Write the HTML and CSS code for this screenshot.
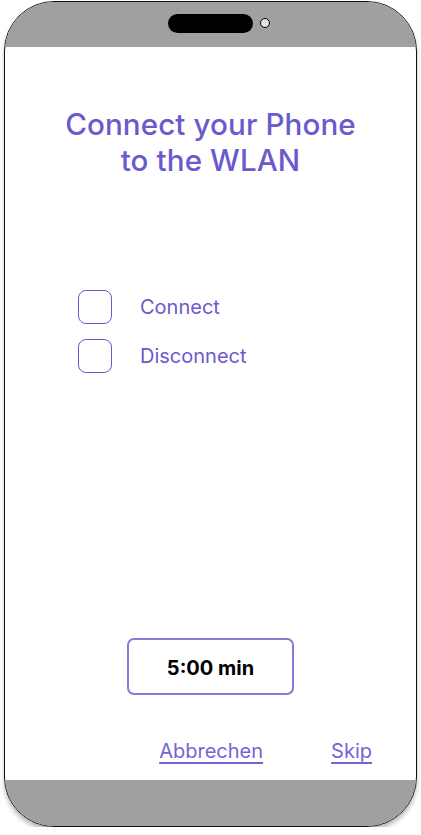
FILE: index.html
```html
<!DOCTYPE html>
<html lang="en">
<head>
<meta charset="utf-8">
<title>Connect WLAN</title>
<link rel="stylesheet" href="styles.css">
</head>
<body>
<div class="phone">
  <div class="top-bar">
    <div class="notch"></div>
    <div class="camera"></div>
  </div>
  <main class="screen">
    <h1 class="title">Connect your Phone<br>to the WLAN</h1>
    <div class="options">
      <label class="option"><span class="box"></span><span class="label">Connect</span></label>
      <label class="option"><span class="box"></span><span class="label">Disconnect</span></label>
    </div>
    <div class="timer">5:00 min</div>
    <div class="links">
      <a class="link" href="#">Abbrechen</a>
      <a class="link" href="#">Skip</a>
    </div>
  </main>
  <div class="bottom-bar"></div>
</div>
</body>
</html>
```
FILE: styles.css
```css
html, body {
  margin: 0;
  padding: 0;
  background: #ffffff;
}
body {
  font-family: Inter, "Noto Sans", sans-serif;
}
.phone {
  box-sizing: border-box;
  margin: 1px 0 0 4px;
  width: 413px;
  height: 826px;
  border: 1.5px solid #111;
  border-radius: 50px;
  overflow: hidden;
  display: flex;
  flex-direction: column;
  box-shadow: 0 4px 4px rgba(0, 0, 0, 0.25);
  background: #fff;
}
.top-bar {
  height: 44.5px;
  background: #a0a0a0;
  display: flex;
  justify-content: center;
  align-items: center;
  gap: 7px;
  padding-left: 17px;
  padding-bottom: 2px;
  box-sizing: border-box;
  flex: none;
}
.notch {
  width: 85px;
  height: 19px;
  background: #000;
  border-radius: 10px;
}
.camera {
  width: 8px;
  height: 8px;
  border-radius: 50%;
  background: #e0e0e0;
  border: 1px solid #000;
}
.screen {
  flex: 1;
  display: flex;
  flex-direction: column;
}
.title {
  margin: 59px 0 0;
  text-align: center;
  color: #6a5acd;
  font-weight: 500;
  font-size: 29.6px;
  line-height: 36px;
  letter-spacing: 0.1px;
}
.options {
  margin: 112px 0 0 73px;
  display: flex;
  flex-direction: column;
  gap: 15px;
}
.option {
  display: flex;
  align-items: center;
  gap: 28px;
}
.box {
  box-sizing: border-box;
  width: 34px;
  height: 34px;
  border: 1px solid #6a5acd;
  border-radius: 8px;
}
.label {
  color: #6a5acd;
  font-size: 20px;
}
.timer {
  margin: 265px 0 0 122px;
  box-sizing: border-box;
  width: 167px;
  height: 57px;
  padding-top: 3px;
  border: 2px solid #8878d8;
  border-radius: 7px;
  display: flex;
  align-items: center;
  justify-content: center;
  font-weight: 700;
  font-size: 20px;
  color: #000;
}
.links {
  margin-top: auto;
  padding: 0 44px 17px 0;
  display: flex;
  justify-content: flex-end;
  gap: 68px;
}
.link {
  color: #7563d8;
  font-size: 20px;
  text-decoration: underline;
  text-underline-offset: 4px;
}
.bottom-bar {
  height: 46px;
  background: #a0a0a0;
  flex: none;
}
```
